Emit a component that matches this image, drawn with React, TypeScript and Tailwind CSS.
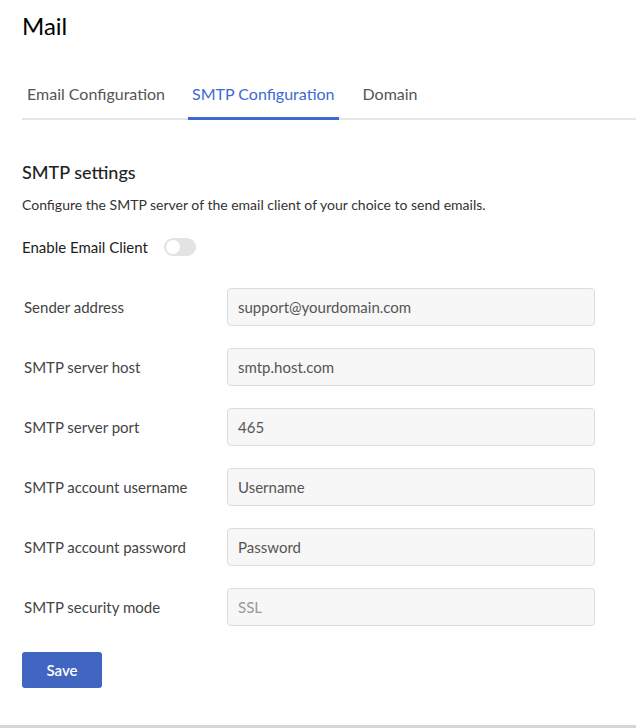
import React from 'react';

const fields = [
  { label: 'Sender address', value: 'support@yourdomain.com' },
  { label: 'SMTP server host', value: 'smtp.host.com' },
  { label: 'SMTP server port', value: '465' },
  { label: 'SMTP account username', value: 'Username' },
  { label: 'SMTP account password', value: 'Password' },
  { label: 'SMTP security mode', value: 'SSL', muted: true },
];

const App: React.FC = () => {
  return (
    <div className="w-[636px] h-[728px] bg-white flex flex-col font-['Lato',_sans-serif] text-[#333]">
      <div className="flex-1 pl-[22px]">
        <h1 className="pt-[11px] text-[24px] leading-[30px] text-black">Mail</h1>

        {/* Tabs */}
        <div className="mt-[43px] flex border-b-2 border-[#e5e5e5] text-[16px] leading-[20px]">
          <div className="px-[5px] pb-[14px] text-[#555]">Email Configuration</div>
          <div className="ml-[18px] px-[4px] pb-[12px] border-b-[3px] border-[#3d6ad6] -mb-[2px] text-[#3d6ad6]">
            SMTP Configuration
          </div>
          <div className="ml-[19px] px-[5px] pb-[14px] text-[#555]">Domain</div>
        </div>

        {/* SMTP settings */}
        <h2 className="mt-[40px] text-[18px] leading-[24px] font-medium text-[#222]">SMTP settings</h2>
        <p className="mt-[12px] text-[14px] leading-[18px] text-[#333]">
          Configure the SMTP server of the email client of your choice to send emails.
        </p>

        <div className="mt-[23px] flex items-center gap-[16px]">
          <span className="text-[15px] leading-[20px] text-[#222]">Enable Email Client</span>
          <div className="w-[32px] h-[18px] rounded-full bg-[#e3e3e3] p-[2px] flex items-center">
            <div className="w-[14px] h-[14px] rounded-full bg-white" />
          </div>
        </div>

        <div className="mt-[31px] flex flex-col gap-[22px] pl-[2px]">
          {fields.map((f) => (
            <div key={f.label} className="flex items-center">
              <span className="w-[203px] text-[15px] text-[#444]">{f.label}</span>
              <div
                className={
                  'w-[368px] h-[38px] rounded-[4px] border border-[#dcdcdc] bg-[#f7f7f7] px-[10px] flex items-center text-[15px] ' +
                  (f.muted ? 'text-[#999]' : 'text-[#555]')
                }
              >
                {f.value}
              </div>
            </div>
          ))}
        </div>

        <button className="mt-[26px] w-[80px] h-[36px] rounded-[3px] bg-[#4066c2] text-white text-[15px] font-semibold">
          Save
        </button>
      </div>
      <div className="h-[3px] bg-[#d6d6d6]" />
    </div>
  );
};

export default App;
